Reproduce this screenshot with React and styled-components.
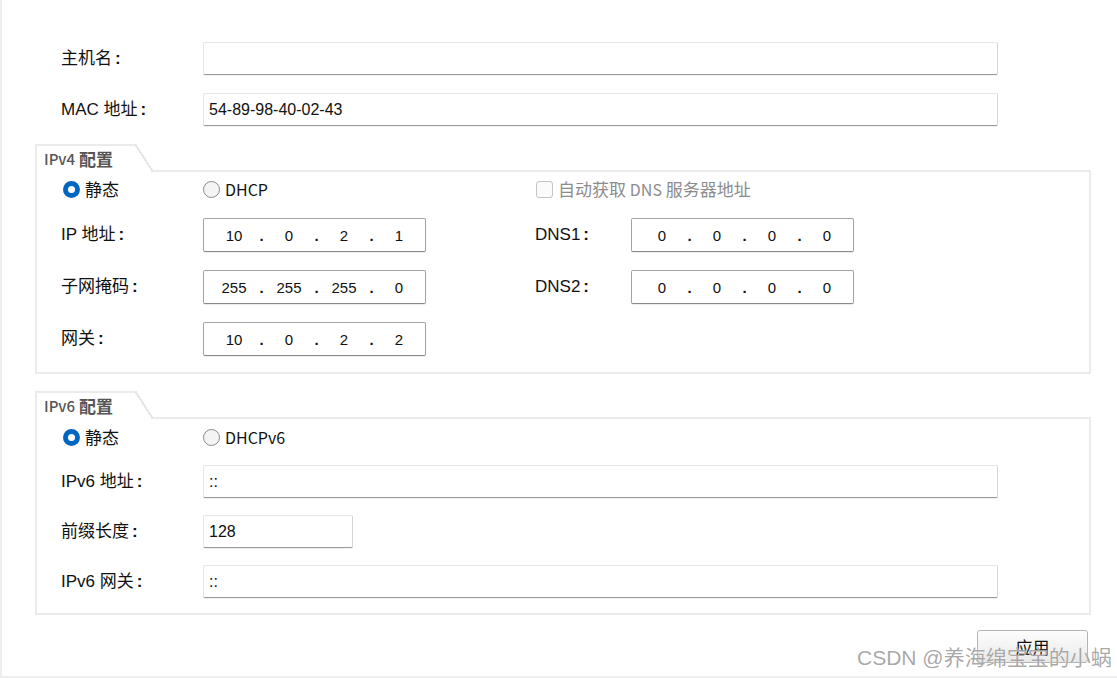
import React from "react";
import styled, { createGlobalStyle } from "styled-components";

const GlobalStyle = createGlobalStyle`
    html, body {
        margin: 0;
        padding: 0;
        background: #ffffff;
    }
    * {
        box-sizing: border-box;
    }
`

const Page = styled.div`
    position: relative;
    width: 1117px;
    height: 678px;
    border-left: 2px solid #eeeeee;
    border-bottom: 2px solid #eeeeee;
    padding: 42px 26px 0 33px;
    font-family: "Liberation Sans", "Noto Sans CJK SC", sans-serif;
    color: #111111;
    overflow: hidden;
`

const TopForm = styled.div`
    display: grid;
    grid-template-columns: 142px 795px;
    grid-auto-rows: 33px;
    row-gap: 18px;
    margin-left: 26px;
`

const Label = styled.div`
    display: flex;
    align-items: center;
    font-size: 17px;
    line-height: 20px;
    color: #111111;
    white-space: nowrap;
    grid-column: ${props => props.col || "auto"};

    &::after {
        content: ":";
        margin-left: 3px;
        font-weight: 700;
    }
`

const TextField = styled.div`
    display: flex;
    align-items: center;
    width: ${props => props.width || "795px"};
    height: 33px;
    padding: 0 5px;
    background: #ffffff;
    border: 1px solid;
    border-color: #e6e6e6 #d4d4d4 #9a9a9a #e6e6e6;
    border-radius: 2px;
    box-shadow: 0 1px 0 rgba(0, 0, 0, 0.06);
    font-size: 16px;
    color: #111111;
`

const Group = styled.section`
    display: flex;
    flex-direction: column;
    margin-top: ${props => props.top || "0px"};
`

const Tab = styled.div`
    position: relative;
    z-index: 1;
    align-self: flex-start;
    display: flex;
    align-items: center;
    height: 28px;
    width: 100px;
    margin-bottom: -2px;
    padding: 0 0 2px 7px;
    background: #ffffff;
    border-top: 2px solid #ebebeb;
    border-left: 2px solid #ebebeb;
    color: #555555;
    white-space: nowrap;

    &::after {
        content: "";
        position: absolute;
        left: 100%;
        top: -2px;
        bottom: 0;
        width: 18px;
        background: linear-gradient(
            to top right,
            #ffffff calc(50% - 1px),
            #e6e6e6 calc(50% - 1px),
            #e6e6e6 calc(50% + 1px),
            transparent calc(50% + 1px)
        );
    }

    .proto {
        font-family: "Noto Sans CJK SC", sans-serif;
        font-size: 15px;
        font-weight: 500;
        margin-right: 4px;
    }
    .word {
        font-family: "Noto Sans CJK SC", sans-serif;
        font-size: 17px;
        font-weight: 700;
    }
`

const Box = styled.div`
    display: grid;
    grid-template-columns: ${props => props.columns};
    grid-template-rows: 22px;
    grid-auto-rows: ${props => props.rowHeight};
    row-gap: ${props => props.rowGap};
    border: 2px solid #ebebeb;
    padding: ${props => props.pad} 0 ${props => props.padBottom} 24px;
`

const Choice = styled.div`
    display: flex;
    align-items: center;
    gap: 5px;
    margin-left: ${props => props.shift || "0px"};
    font-family: "Noto Sans CJK SC", sans-serif;
    font-size: 17px;
    line-height: 20px;
    color: ${props => props.disabled ? "#8c8c8c" : "#111111"};
    white-space: nowrap;
    grid-column: ${props => props.col || "auto"};

    .latin {
        font-size: 16px;
    }
`

const RadioDot = styled.span`
    flex: none;
    width: 17px;
    height: 17px;
    border-radius: 50%;
    background: ${props => props.checked ? "#0067c0" : "#f4f4f4"};
    border: ${props => props.checked ? "none" : "1px solid #8a8a8a"};
    display: flex;
    align-items: center;
    justify-content: center;

    &::after {
        content: "";
        display: ${props => props.checked ? "block" : "none"};
        width: 7px;
        height: 7px;
        border-radius: 50%;
        background: #ffffff;
    }
`

const CheckSquare = styled.span`
    flex: none;
    width: 17px;
    height: 17px;
    border-radius: 3px;
    border: 1px solid #c4c4c4;
    background: #fbfbfb;
`

const IpBox = styled.div`
    display: flex;
    align-items: center;
    width: 223px;
    height: 34px;
    padding-left: 9px;
    background: #ffffff;
    border: 1px solid;
    border-color: #a3a3a3 #a3a3a3 #8a8a8a #a3a3a3;
    border-radius: 2px;
    box-shadow: 0 1px 1px rgba(0, 0, 0, 0.08);
    font-size: 15px;
    color: #111111;
`

const Octet = styled.span`
    width: 42px;
    text-align: center;
`

const Dot = styled.span`
    width: 13px;
    text-align: center;
    font-weight: 700;
`

const Footer = styled.div`
    display: flex;
    justify-content: flex-end;
    padding-right: 3px;
    margin-top: 15px;
`

const ApplyButton = styled.button`
    width: 111px;
    height: 33px;
    border: 1px solid #b3b3b3;
    border-radius: 3px;
    background: linear-gradient(#fdfdfd, #e9e9e9);
    font-family: "Noto Sans CJK SC", sans-serif;
    font-size: 17px;
    color: #111111;
    cursor: pointer;
`

const Watermark = styled.div`
    position: absolute;
    left: 855px;
    top: 645px;
    font-family: "Liberation Sans", "Noto Sans CJK SC", sans-serif;
    font-size: 21px;
    line-height: 26px;
    color: rgba(140, 140, 140, 0.75);
    white-space: nowrap;
    pointer-events: none;
    text-shadow: 0 0 1px #ffffff;
`

const Radio = ({ checked, children, shift }) => (
    <Choice shift={shift}>
        <RadioDot checked={checked} />
        <span>{children}</span>
    </Choice>
)

const IpField = ({ value }) => {
    const parts = value.split(".")
    return (
        <IpBox>
            {parts.map((p, i) => (
                <React.Fragment key={i}>
                    <Octet>{p}</Octet>
                    {i < parts.length - 1 && <Dot>.</Dot>}
                </React.Fragment>
            ))}
        </IpBox>
    )
}

const GroupTitle = ({ proto }) => (
    <Tab>
        <span className="proto">{proto}</span>
        <span className="word">配置</span>
    </Tab>
)

export default function App() {
    return (
        <>
            <GlobalStyle />
            <Page>
                <TopForm>
                    <Label>主机名</Label>
                    <TextField></TextField>
                    <Label>MAC 地址</Label>
                    <TextField>54-89-98-40-02-43</TextField>
                </TopForm>

                <Group top="18px">
                    <GroupTitle proto="IPv4" />
                    <Box
                        columns="142px 223px 109px 96px 223px"
                        rowHeight="34px"
                        rowGap="18px"
                        pad="6px"
                        padBottom="16px"
                    >
                        <Radio checked shift="2px">静态</Radio>
                        <Radio><span className="latin">DHCP</span></Radio>
                        <Choice col="4 / span 2" disabled shift="1px">
                            <CheckSquare />
                            <span>自动获取 <span className="latin">DNS</span> 服务器地址</span>
                        </Choice>

                        <Label>IP 地址</Label>
                        <IpField value="10.0.2.1" />
                        <Label col="4">DNS1</Label>
                        <IpField value="0.0.0.0" />

                        <Label col="1">子网掩码</Label>
                        <IpField value="255.255.255.0" />
                        <Label col="4">DNS2</Label>
                        <IpField value="0.0.0.0" />

                        <Label col="1">网关</Label>
                        <IpField value="10.0.2.2" />
                    </Box>
                </Group>

                <Group top="17px">
                    <GroupTitle proto="IPv6" />
                    <Box
                        columns="142px 795px"
                        rowHeight="33px"
                        rowGap="17px"
                        pad="7px"
                        padBottom="15px"
                    >
                        <Radio checked shift="2px">静态</Radio>
                        <Radio><span className="latin">DHCPv6</span></Radio>

                        <Label>IPv6 地址</Label>
                        <TextField>::</TextField>

                        <Label>前缀长度</Label>
                        <TextField width="150px">128</TextField>

                        <Label>IPv6 网关</Label>
                        <TextField>::</TextField>
                    </Box>
                </Group>

                <Footer>
                    <ApplyButton>应用</ApplyButton>
                </Footer>

                <Watermark>CSDN @养海绵宝宝的小蜗</Watermark>
            </Page>
        </>
    )
}
